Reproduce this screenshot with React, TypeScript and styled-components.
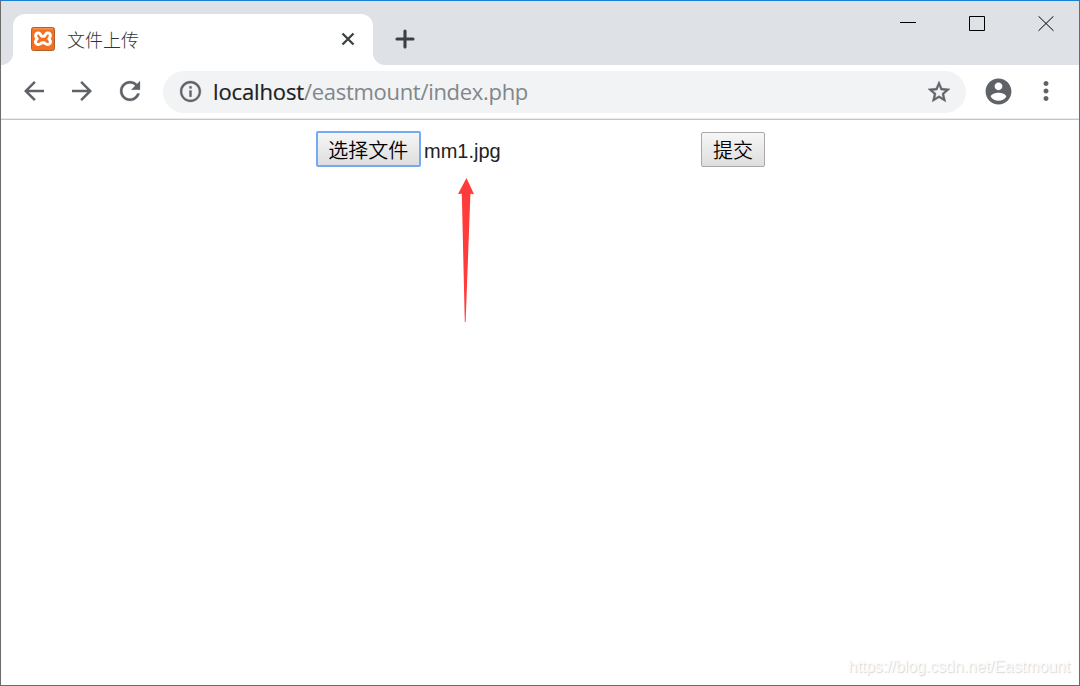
import React from "react";
import styled, { createGlobalStyle } from "styled-components";

const GlobalStyle = createGlobalStyle`
  * { box-sizing: border-box; }
  body { margin: 0; background: #fff; }
`;

const Window = styled.div`
  width: 1080px;
  height: 686px;
  display: flex;
  flex-direction: column;
  position: relative;
  overflow: hidden;
  background: #fff;
  border: 1px solid #6b6b6b;
  border-top-color: #1a80d2;
`;

const TabStrip = styled.header`
  height: 64px;
  flex: none;
  display: flex;
  padding: 13px 0 0 12px;
  background: #dee1e6;
`;

const Tab = styled.div`
  width: 360px;
  height: 51px;
  display: flex;
  align-items: center;
  padding: 0 17px 2px 18px;
  background: #fff;
  border-radius: 12px 12px 0 0;
  position: relative;

  &::before,
  &::after {
    content: "";
    position: absolute;
    bottom: 0;
    width: 12px;
    height: 12px;
  }
  &::before {
    left: -12px;
    background: radial-gradient(circle at 0 0, transparent 11.5px, #fff 12.5px);
  }
  &::after {
    right: -12px;
    background: radial-gradient(circle at 12px 0, transparent 11.5px, #fff 12.5px);
  }
`;

const TabTitle = styled.span`
  flex: 1;
  padding-left: 12px;
  font: 300 18px/26px "Noto Sans CJK SC", sans-serif;
  color: #303438;
`;

const NewTab = styled.div`
  padding: 15px 0 0 22px;
  svg { display: block; }
`;

const WindowControls = styled.div`
  margin-left: auto;
  display: flex;
  gap: 53px;
  padding: 2px 25px 0 0;
  height: 18px;
  svg { display: block; flex: none; }
`;

const Toolbar = styled.nav`
  height: 55px;
  flex: none;
  display: flex;
  align-items: center;
  padding: 0 18px 1px 18px;
  border-bottom: 1px solid #c3c4c5;
  box-shadow: inset 0 -1px #eaebec;
`;

const NavButtons = styled.div`
  display: flex;
  gap: 18px;
  width: 144px;
  padding-bottom: 1px;
  svg { display: block; flex: none; }
`;

const AddressBar = styled.div`
  width: 803px;
  height: 42px;
  display: flex;
  align-items: center;
  padding: 0 14px 0 15px;
  border-radius: 21px;
  background: #f1f3f4;
  svg { display: block; flex: none; }
`;

const Url = styled.div`
  flex: 1;
  padding: 0 0 2px 10px;
  font: 22px/30px "Open Sans", sans-serif;
  letter-spacing: -0.3px;
  color: #80868b;
  white-space: nowrap;
`;

const Host = styled.span`
  color: #202124;
  letter-spacing: -0.13px;
  -webkit-text-stroke: 0.2px #202124;
`;

const ToolbarActions = styled.div`
  display: flex;
  align-items: center;
  gap: 17px;
  margin-left: auto;
  padding-bottom: 1px;
  svg { display: block; flex: none; }
`;

const UploadForm = styled.form`
  display: flex;
  align-items: flex-start;
  padding: 11px 0 0 315px;
`;

const FormButton = styled.button<{ $focused?: boolean }>`
  width: ${(p) => (p.$focused ? 104.5 : 64)}px;
  height: ${(p) => (p.$focused ? 36 : 35)}px;
  margin-top: ${(p) => (p.$focused ? 0 : 1)}px;
  padding: ${(p) => (p.$focused ? "1px 0 0" : "0")};
  border: ${(p) => (p.$focused ? "2px solid #74a9f4" : "1px solid #a9a9a9")};
  border-radius: 2px;
  background: linear-gradient(#f6f6f6, #dedede);
  color: #000;
  font: 20px/30px "Noto Sans CJK SC", sans-serif;
  font-weight: 350;
  white-space: nowrap;
`;

const FileName = styled.span`
  width: 280.5px;
  padding-left: 3.5px;
  font: 20px/24px "Liberation Sans", Arial, sans-serif;
  margin-top: 8px;
  color: #222;
`;

const Pointer = styled.svg`
  position: absolute;
  left: 456px;
  top: 176px;
`;

const Watermark = styled.div`
  position: absolute;
  right: 9px;
  bottom: 8px;
  font: 16px/20px "Liberation Sans", Arial, sans-serif;
  letter-spacing: -0.08px;
  color: #fbfbfb;
  text-shadow: 1px 1px 1px #d6d6d6;
`;

const Glyph = ({ d, size, weight = 0 }: { d: string; size: number; weight?: number }) => (
  <svg width={size} height={size} viewBox="0 0 24 24" fill="#5f6368" stroke="#5f6368" strokeWidth={weight}>
    <path d={d} />
  </svg>
);

const Favicon = () => (
  <svg width="24" height="24" viewBox="0 0 24 24">
    <rect x=".5" y=".5" width="23" height="23" rx="2" fill="#f37021" stroke="#b5602a" />
    <path d="M2 1.800h20" stroke="#f5a56c" strokeWidth="1" />
    <path
      d="M8.300 6.200C5.600 5.400 4.400 7.200 4.700 9c.2 1.300.6 2 1.500 2.900-1.200.9-1.900 2.300-1.500 3.900.6 1.900 3.400 2.200 5 .7.900-.9 3.700-.9 4.600 0 1.600 1.500 4.400 1.200 5-.7.400-1.600-.3-3-1.500-3.900.9-.9 1.300-1.600 1.500-2.900.3-1.800-.9-3.600-3.600-2.800-1.600.6-1.300 3-2.400 3h-2.600c-1.100 0-.8-2.400-2.400-3z"
      fill="none"
      stroke="#fff"
      strokeWidth="3"
      strokeLinejoin="round"
    />
  </svg>
);

export default function App() {
  return (
    <>
      <GlobalStyle />
      <Window>
        <TabStrip>
          <Tab>
            <Favicon />
            <TabTitle>文件上传</TabTitle>
            <svg width="16" height="16" viewBox="0 0 16 16">
              <path d="M2.500 2.500l11 11M13.500 2.500l-11 11" stroke="#3c4043" strokeWidth="2.300" />
            </svg>
          </Tab>
          <NewTab>
            <svg width="20" height="20" viewBox="0 0 20 20">
              <path d="M10 2v16M2 10h16" stroke="#3c4043" strokeWidth="3.100" strokeLinecap="round" />
            </svg>
          </NewTab>
          <WindowControls>
            <svg width="16" height="16" viewBox="0 0 16 16">
              <path d="M0 6.500h16" stroke="#000" />
            </svg>
            <svg width="16" height="16" viewBox="0 0 16 16">
              <path d="M.5.5h15v14H.5z" fill="none" stroke="#000" />
            </svg>
            <svg width="16" height="16" viewBox="0 0 16 16">
              <path d="M.5.200l15 14.600M15.500.200l-15 14.600" stroke="#000" />
            </svg>
          </WindowControls>
        </TabStrip>
        <Toolbar>
          <NavButtons>
            <Glyph size={30} d="M20 11H7.830l5.590-5.590L12 4l-8 8 8 8 1.410-1.410L7.830 13H20v-2z" />
            <Glyph size={30} d="M12 4l-1.410 1.410L16.170 11H4v2h12.170l-5.580 5.590L12 20l8-8z" />
            <Glyph
              size={30}
              weight={0.2}
              d="M17.650 6.350C16.200 4.900 14.210 4 12 4c-4.420 0-7.990 3.580-7.990 8s3.570 8 7.990 8c3.730 0 6.840-2.550 7.730-6h-2.080c-.820 2.330-3.040 4-5.650 4-3.310 0-6-2.690-6-6s2.690-6 6-6c1.660 0 3.140.690 4.220 1.780L13 11h7V4l-2.350 2.350z"
            />
          </NavButtons>
          <AddressBar>
            <Glyph
              size={25}
              weight={0.3}
              d="M11 7h2v2h-2zm0 4h2v6h-2zm1-9C6.480 2 2 6.480 2 12s4.480 10 10 10 10-4.480 10-10S17.520 2 12 2zm0 18c-4.410 0-8-3.590-8-8s3.590-8 8-8 8 3.590 8 8-3.590 8-8 8z"
            />
            <Url>
              <Host>localhost</Host>/eastmount/index.php
            </Url>
            <Glyph
              size={26}
              weight={0.5}
              d="M22 9.240l-7.190-.620L12 2 9.190 8.630 2 9.240l5.460 4.730L5.820 21 12 17.270 18.180 21l-1.630-7.030L22 9.240zM12 15.400l-3.760 2.270 1-4.280-3.320-2.880 4.380-.380L12 6.100l1.710 4.040 4.380.380-3.320 2.880 1 4.280L12 15.400z"
            />
          </AddressBar>
          <ToolbarActions>
            <Glyph
              size={31}
              d="M12 2C6.480 2 2 6.480 2 12s4.480 10 10 10 10-4.480 10-10S17.520 2 12 2zm0 3c1.660 0 3 1.340 3 3s-1.340 3-3 3-3-1.340-3-3 1.340-3 3-3zm0 14.200c-2.500 0-4.710-1.280-6-3.220.030-1.990 4-3.080 6-3.080 1.990 0 5.970 1.090 6 3.080-1.290 1.940-3.500 3.220-6 3.220z"
            />
            <Glyph
              size={30}
              d="M12 8c1.100 0 2-.9 2-2s-.9-2-2-2-2 .9-2 2 .9 2 2 2zm0 2c-1.100 0-2 .9-2 2s.9 2 2 2 2-.9 2-2-.9-2-2-2zm0 6c-1.100 0-2 .9-2 2s.9 2 2 2 2-.9 2-2-.9-2-2-2z"
            />
          </ToolbarActions>
        </Toolbar>
        <UploadForm>
          <FormButton type="button" $focused>选择文件</FormButton>
          <FileName>mm1.jpg</FileName>
          <FormButton type="button">提交</FormButton>
        </UploadForm>
        <Pointer width="18" height="146" viewBox="0 0 18 146">
          <path d="M9.500 1L17 17.200l-3.600-.4L8.600 145h-.8L4.800 16.800 1 17z" fill="#ff3b3b" />
        </Pointer>
        <Watermark>https://blog.csdn.net/Eastmount</Watermark>
      </Window>
    </>
  );
}
